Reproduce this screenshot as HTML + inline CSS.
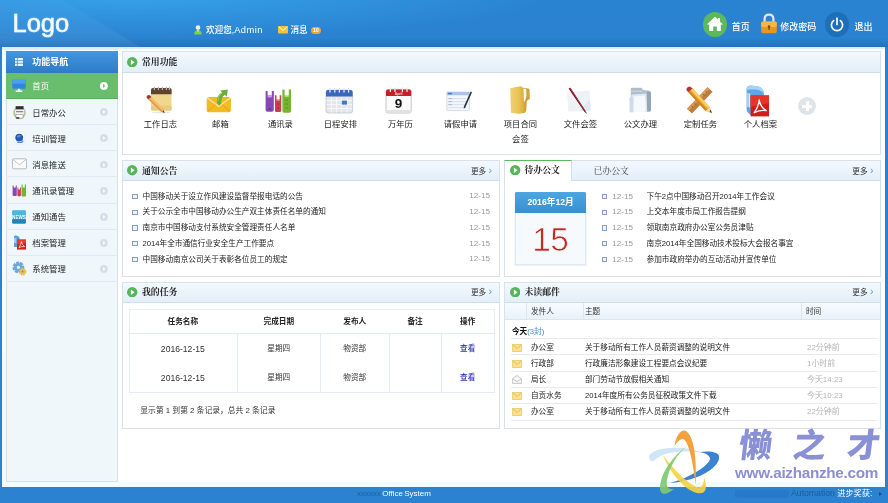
<!DOCTYPE html>
<html lang="zh-CN">
<head>
<meta charset="utf-8">
<title>Office System</title>
<style>
*{margin:0;padding:0;box-sizing:border-box;}
html,body{width:888px;height:503px;overflow:hidden;}
body{filter:contrast(1.001);}
body{position:relative;background:#2a82d0;font-family:"Liberation Sans","Noto Sans CJK SC",sans-serif;font-size:7.65px;color:#333;line-height:1;}
.abs{position:absolute;}
#hdr{position:absolute;left:0;top:0;width:888px;height:46.6px;background:radial-gradient(ellipse 420px 42px at 130px -4px,rgba(58,172,242,.75),rgba(58,172,242,0) 100%),linear-gradient(211deg,rgba(255,255,255,0) 85.2%,rgba(255,255,255,.055) 85.7%),linear-gradient(to bottom,#2a83d1 0,#2a82d0 80%,#2678c6 93%,#2270ba 100%);}
#logo{position:absolute;left:12.5px;top:8.6px;font-size:25.5px;color:#f2f9ff;letter-spacing:0px;line-height:28px;-webkit-text-stroke:0.5px #f2f9ff;text-shadow:0 0 2px rgba(255,255,255,.35);}
.ht{position:absolute;color:#fff;white-space:nowrap;}
#frame{position:absolute;left:2.3px;top:46.5px;width:882.6px;height:440.3px;background:linear-gradient(#cfeafa 0,#e0f2fd 2.6px,#f4fcff 3px,#f2fbff 100%);}
#content{position:absolute;left:115.6px;top:2.8px;width:767px;height:432.5px;background:#fff;}
#side{position:absolute;left:4px;top:4.5px;width:111.4px;height:431px;background:#f0f7fb;border:1px solid #d9dfe9;}
#sidehd{position:absolute;left:-1px;top:-1px;width:111.4px;height:22.5px;background:linear-gradient(#4496e0,#2b7ac6);}
#sidehd span{position:absolute;left:26px;top:7.2px;font-size:9px;font-weight:bold;color:#fff;}
.mi{position:absolute;left:-1px;width:111.4px;height:26.1px;border-bottom:1px solid #dfe9f1;}
.mi.on{background:#69be6d;border-bottom:1px solid #5cac60;}
.mi span{position:absolute;left:26px;top:9.6px;font-size:8.4px;color:#222;white-space:nowrap;}
.mi.on span{color:#fff;top:9.2px;}
.mi svg{position:absolute;}
.panel{position:absolute;background:#fff;border:1px solid #d9e2eb;}
.ph{position:absolute;left:0;top:0;right:0;height:20px;background:linear-gradient(#f3f9fe,#e3eef8);border-bottom:1px solid #d0dce8;}
.pt{position:absolute;left:19px;top:5.6px;font-family:"Liberation Serif","Noto Serif CJK SC",serif;font-weight:bold;font-size:8.9px;color:#222;white-space:nowrap;}
.gc{position:absolute;left:4.4px;top:4.2px;}
.more{position:absolute;right:6.5px;top:5.6px;font-size:7.65px;color:#333;white-space:nowrap;}
.more b{font-weight:normal;color:#5a9fd6;margin-left:2.4px;font-size:10.5px;line-height:7px;font-family:"Liberation Sans",sans-serif;}
.ic{position:absolute;width:60px;top:33px;height:60px;}
.ic span{position:absolute;left:0;top:31.7px;width:60px;text-align:center;font-size:8.3px;color:#222;white-space:nowrap;line-height:15.2px;}
.ic svg{position:absolute;}
.li{position:absolute;white-space:nowrap;color:#222;margin-top:.8px;}
.li:before{content:"";box-sizing:border-box;position:absolute;left:-10.2px;top:1.3px;width:5.4px;height:5.4px;border:1.3px solid #859fc3;background:#eef3f9;}
.dt{position:absolute;color:#999;white-space:nowrap;font-size:8.1px;margin-top:.6px;}
.wm{position:absolute;top:425px;font-family:"Liberation Sans","Noto Sans CJK SC",sans-serif;font-weight:900;font-size:33px;line-height:42px;color:#8a90d6;transform:skewX(-7deg);}
.nb:before{display:none;}
.tc{position:absolute;text-align:center;white-space:nowrap;color:#333;height:10px;line-height:10px;}
.tab{position:absolute;left:-1px;top:-1px;width:68px;height:21px;background:#fff;border-top:1.6px solid #5cb85c;border-right:1px solid #d5dfe8;border-left:1px solid #d5dfe8;}
</style>
</head>
<body>
<div id="hdr">
  <div id="logo">Logo</div>
  <svg class="abs" style="left:194px;top:25px" width="8" height="10" viewBox="0 0 8 10"><circle cx="4" cy="2.6" r="2.3" fill="#f6f3c8"/><path d="M0.3 9.6 C0.3 6.2 1.8 5.2 4 5.2 C6.2 5.2 7.7 6.2 7.7 9.6 Z" fill="#7fd04a"/><path d="M3 5.2 L4 7 L5 5.2 Z" fill="#f6f3c8"/></svg>
  <div class="ht" style="left:206px;top:26px;font-size:8.6px;font-weight:500">欢迎您,<span style="font-size:9.3px;letter-spacing:.45px">Admin</span></div>
  <svg class="abs" style="left:277.5px;top:26px" width="10" height="8" viewBox="0 0 10 8"><rect x="0" y="0" width="10" height="7.6" rx="0.8" fill="#f3c13a"/><path d="M0.6 0.8 L5 4.4 L9.4 0.8" fill="none" stroke="#fff6d0" stroke-width="1"/></svg>
  <div class="ht" style="left:290.5px;top:26px;font-size:8.6px;font-weight:500">消息</div>
  <div class="abs" style="left:311px;top:26.5px;width:9.6px;height:7px;border-radius:3.5px;background:#f0a23a;color:#fff;font-size:5.5px;font-weight:bold;text-align:center;line-height:7px;">10</div>

  <div class="abs" style="left:702.7px;top:12.2px;width:24.6px;height:24.6px;border-radius:50%;background:#5cb85c;"></div>
  <svg class="abs" style="left:706px;top:16px" width="18" height="16" viewBox="0 0 18 16"><path d="M9 0.8 L0.8 8.4 L3.2 8.4 L3.2 15 L7.2 15 L7.2 10.4 L10.8 10.4 L10.8 15 L14.8 15 L14.8 8.4 L17.2 8.4 L14 5.4 L14 2 L12 2 L12 3.6 Z" fill="#fff"/></svg>
  <div class="ht" style="left:731.8px;top:22.8px;font-size:9px;font-weight:500">首页</div>
  <svg class="abs" style="left:760px;top:13px" width="18" height="21" viewBox="0 0 18 21"><path d="M4.6 9 L4.6 6 C4.6 2.8 6.4 1.6 9 1.6 C11.6 1.6 13.4 2.8 13.4 6 L13.4 9" fill="none" stroke="#e6e6e6" stroke-width="2.2"/><rect x="1.2" y="8.6" width="15.6" height="11.6" rx="1.6" fill="#ea961c"/><rect x="1.2" y="8.6" width="15.6" height="5.4" rx="1.6" fill="#f6b840"/><circle cx="9" cy="13.6" r="1.3" fill="#7a4a10"/><rect x="8.4" y="14" width="1.2" height="3" fill="#7a4a10"/></svg>
  <div class="ht" style="left:780.3px;top:22.8px;font-size:9px;font-weight:500">修改密码</div>
  <div class="abs" style="left:824.7px;top:12.2px;width:24.6px;height:24.6px;border-radius:50%;background:#1d6fb8;"></div>
  <svg class="abs" style="left:829px;top:16.5px" width="16" height="16" viewBox="0 0 16 16"><path d="M4.6 3.6 A5.6 5.6 0 1 0 11.4 3.6" fill="none" stroke="#fff" stroke-width="1.7" stroke-linecap="round"/><path d="M8 1.2 L8 7.4" stroke="#fff" stroke-width="1.7" stroke-linecap="round"/></svg>
  <div class="ht" style="left:854.5px;top:22.8px;font-size:9px;font-weight:500">退出</div>
</div>
<div id="frame">
  <div id="content"></div>
  <div id="side">
    <div id="sidehd"><svg class="abs" style="left:9px;top:7px" width="8" height="8" viewBox="0 0 8 8"><rect x="0" y="0" width="8" height="8" fill="#e8f2fc"/><path d="M0 2.6 H8 M0 5.3 H8 M2.4 0 V8" stroke="#3a88d4" stroke-width="0.7"/></svg><span>功能导航</span></div>
    <div class="mi on" style="top:21px;height:26px"><svg style="left:6px;top:5.5px" width="14" height="14" viewBox="0 0 14 14"><rect x="0.3" y="0.8" width="13.4" height="9" rx="0.8" fill="#2f86e0"/><rect x="0.3" y="0.8" width="13.4" height="4" rx="0.8" fill="#4aa0f0"/><rect x="5.8" y="9.8" width="2.4" height="2" fill="#eef4fa"/><rect x="3.6" y="11.6" width="6.8" height="1.4" rx="0.6" fill="#fff"/></svg><span>首页</span><svg style="left:93.9px;top:9.3px" width="7.8" height="7.8" viewBox="0 0 10 10"><circle cx="5" cy="5" r="5" fill="#fff"/><path d="M3.9 2.6 L6.9 5 L3.9 7.4 Z" fill="#69be6d"/></svg></div>
    <div class="mi" style="top:47.00px"><svg style="left:6px;top:5.5px" width="15" height="15" viewBox="0 0 15 15"><circle cx="7.5" cy="8" r="6.3" fill="#b9d08a"/><rect x="3.6" y="1.2" width="8" height="3.2" fill="#2d2d2d"/><rect x="2.6" y="4.4" width="10" height="5.6" rx="0.8" fill="#f2f2f2" stroke="#9a9a9a" stroke-width="0.5"/><rect x="4" y="6.2" width="7.2" height="1" fill="#6e6e6e"/><rect x="4" y="9.4" width="7" height="3.6" fill="#fff" stroke="#888" stroke-width="0.5"/><rect x="4.2" y="12.2" width="3" height="1.4" fill="#2d2d2d"/></svg><span>日常办公</span><svg style="left:93.9px;top:9.3px" width="7.8" height="7.8" viewBox="0 0 10 10"><circle cx="5" cy="5" r="5" fill="#d6dfe7"/><path d="M3.9 2.6 L6.9 5 L3.9 7.4 Z" fill="#fff"/></svg></div>
    <div class="mi" style="top:73.15px"><svg style="left:7px;top:6px" width="13" height="14" viewBox="0 0 13 14"><rect x="1.2" y="0.6" width="10.6" height="12.6" rx="1.2" fill="#f7f9fc" stroke="#dfe5ec" stroke-width="0.5"/><circle cx="6.2" cy="6.6" r="3.9" fill="#2458a8"/><path d="M3.6 5 Q6 3 8.6 4.6 Q7 6.6 4.8 7 Z" fill="#4c8ee0"/><path d="M3.6 10 Q6.5 12.4 10 10 L9 12 L4.6 12 Z" fill="#3b78c8"/><circle cx="9.4" cy="10.4" r="1.1" fill="#5a9be8"/></svg><span>培训管理</span><svg style="left:93.9px;top:9.3px" width="7.8" height="7.8" viewBox="0 0 10 10"><circle cx="5" cy="5" r="5" fill="#d6dfe7"/><path d="M3.9 2.6 L6.9 5 L3.9 7.4 Z" fill="#fff"/></svg></div>
    <div class="mi" style="top:99.30px"><svg style="left:6px;top:7px" width="15" height="12" viewBox="0 0 15 12"><rect x="0.6" y="0.8" width="13.8" height="10" rx="0.8" fill="#fdfdfd" stroke="#a9a9a9" stroke-width="0.8"/><path d="M1 1.4 L7.5 6.8 L14 1.4" fill="none" stroke="#b5b5b5" stroke-width="0.8"/></svg><span>消息推送</span><svg style="left:93.9px;top:9.3px" width="7.8" height="7.8" viewBox="0 0 10 10"><circle cx="5" cy="5" r="5" fill="#d6dfe7"/><path d="M3.9 2.6 L6.9 5 L3.9 7.4 Z" fill="#fff"/></svg></div>
    <div class="mi" style="top:125.45px"><svg style="left:5.5px;top:6px" width="15" height="14" viewBox="0 0 15 14"><path d="M0.6 2.4 L1.6 2.4 L1.6 4.6 L3.8 4.6 L3.8 2.4 L4.8 2.4 L4.8 12 Q4.8 13 3.8 13 L1.6 13 Q0.6 13 0.6 12 Z" fill="#8748b6"/><path d="M5.4 4.6 L6.3 4.6 L6.3 6.6 L8 6.6 L8 4.6 L8.9 4.6 L8.9 12.2 Q8.9 13.2 7.9 13.2 L6.4 13.2 Q5.4 13.2 5.4 12.2 Z" fill="#c8404e"/><path d="M9.5 1.4 L10.6 1.4 L10.6 4.4 L12.8 4.4 L12.8 1.4 L14 1.4 L14 12.4 Q14 13.4 13 13.4 L10.5 13.4 Q9.5 13.4 9.5 12.4 Z" fill="#74b432"/></svg><span>通讯录管理</span><svg style="left:93.9px;top:9.3px" width="7.8" height="7.8" viewBox="0 0 10 10"><circle cx="5" cy="5" r="5" fill="#d6dfe7"/><path d="M3.9 2.6 L6.9 5 L3.9 7.4 Z" fill="#fff"/></svg></div>
    <div class="mi" style="top:151.60px"><svg style="left:6px;top:6px" width="14" height="14" viewBox="0 0 14 14"><rect x="0.2" y="0.6" width="13.6" height="12.8" rx="1" fill="#2a9fce"/><rect x="0.2" y="0.6" width="13.6" height="5" rx="1" fill="#4cb8e0"/><rect x="0.2" y="9.6" width="13.6" height="3.8" rx="1" fill="#1d86b4"/><text x="7" y="8.6" font-family="Liberation Sans,sans-serif" font-size="4.6" font-weight="bold" fill="#fff" text-anchor="middle">NEWS</text></svg><span>通知通告</span><svg style="left:93.9px;top:9.3px" width="7.8" height="7.8" viewBox="0 0 10 10"><circle cx="5" cy="5" r="5" fill="#d6dfe7"/><path d="M3.9 2.6 L6.9 5 L3.9 7.4 Z" fill="#fff"/></svg></div>
    <div class="mi" style="top:177.75px"><svg style="left:6.5px;top:5px" width="14" height="16" viewBox="0 0 14 16"><path d="M1 1 Q4 -0.4 6.6 2.4 L6.6 12 L1 12 Z" fill="#5b9be0"/><path d="M1.6 3 L1.6 8 M2.8 3 L2.8 8" stroke="#dcecfb" stroke-width="0.7"/><path d="M4 4.6 L13 4.6 L13 14.6 L4 14.6 Z" fill="#d8201c"/><path d="M4 4.6 L13 4.6 L13 8 L4 9.4 Z" fill="#ea3a30"/><path d="M6 12.6 Q8 9.4 8.4 6.6 Q8.8 9.8 11.6 11.6 Q8.6 11.2 6 12.6 Z" fill="none" stroke="#fff" stroke-width="0.7"/></svg><span>档案管理</span><svg style="left:93.9px;top:9.3px" width="7.8" height="7.8" viewBox="0 0 10 10"><circle cx="5" cy="5" r="5" fill="#d6dfe7"/><path d="M3.9 2.6 L6.9 5 L3.9 7.4 Z" fill="#fff"/></svg></div>
    <div class="mi" style="top:203.90px"><svg style="left:6px;top:5.5px" width="15" height="15" viewBox="0 0 15 15"><circle cx="6.4" cy="6.4" r="4.6" fill="none" stroke="#6ea6e2" stroke-width="2.6" stroke-dasharray="2.9 0.9"/><circle cx="6.4" cy="6.4" r="4.4" fill="#6ea6e2"/><circle cx="6.4" cy="6.4" r="1.6" fill="#e4effa"/><circle cx="10.6" cy="10.6" r="3" fill="none" stroke="#eab83a" stroke-width="1.6" stroke-dasharray="1.7 0.7"/><circle cx="10.6" cy="10.6" r="2.8" fill="#edc248"/><circle cx="10.6" cy="10.6" r="1" fill="#6a90c8"/></svg><span>系统管理</span><svg style="left:93.9px;top:9.3px" width="7.8" height="7.8" viewBox="0 0 10 10"><circle cx="5" cy="5" r="5" fill="#d6dfe7"/><path d="M3.9 2.6 L6.9 5 L3.9 7.4 Z" fill="#fff"/></svg></div>
  </div>
</div>
<div class="panel" style="left:122px;top:51px;width:759px;height:103.5px">
  <div class="ph" style="height:21px"><svg class="gc" style="top:5px" width="10.4" height="10.4" viewBox="0 0 10 10"><circle cx="5" cy="5" r="5" fill="#56b45a"/><path d="M3.7 2.4 L7.3 5 L3.7 7.6 Z" fill="#fff"/></svg><div class="pt" style="top:6.4px">常用功能</div></div>
  <div class="ic" style="left:7.4px"><svg style="left:15px;top:0" width="30" height="32" viewBox="0 0 30 32"><ellipse cx="16" cy="27.4" rx="9" ry="1" fill="#e6e6e6"/><rect x="6" y="3.6" width="20.6" height="22" rx="1.6" fill="#efd88e"/><rect x="6" y="20.5" width="20.6" height="5.1" rx="1.4" fill="#e6cc7c"/><path d="M6 5 Q6 3 8 3 L24.6 3 Q26.6 3 26.6 5 L26.6 9.2 L6 9.2 Z" fill="#5e4330"/><path d="M9.4 2.4 V4.6 M13.4 2.4 V4.6 M17.4 2.4 V4.6 M21.4 2.4 V4.6 M24.4 2.6 V4.6" stroke="#b9b2aa" stroke-width="1.3" stroke-linecap="round"/><path d="M3.2 14.4 L6.2 12 L18.4 24.6 L19.4 28 L16 26.8 Z" fill="#e89a46"/><path d="M4.8 13.2 L6.2 12 L18.4 24.6 L17.2 25.6 Z" fill="#f6c074"/><path d="M1.6 12.6 Q1.2 11.4 2.4 10.6 L3.4 10 Q4.4 9.6 5.2 10.6 L6.4 12 L3.2 14.6 Z" fill="#9c3a34"/><path d="M17.6 26.4 L18.9 25.6 L19.6 28.2 Z" fill="#4a3020"/></svg><span>工作日志</span></div>
  <div class="ic" style="left:67.4px"><svg style="left:15px;top:0" width="30" height="32" viewBox="0 0 30 32"><rect x="1.7" y="11.9" width="24.2" height="15.4" rx="2.6" fill="#f2bb22"/><path d="M2.4 13 L13.8 21.4 L25.2 13" fill="none" stroke="#fbe392" stroke-width="1.5"/><path d="M2.6 26.4 L10.4 19.6 M25 26.4 L17.2 19.6" stroke="#dca414" stroke-width="0.9"/><path d="M12.2 18.6 Q11 10.4 17 7.6 L15.4 5.4 L22.8 4.4 L21.8 11.8 L19.8 9.8 Q16 12 16.2 19 L14 20.6 Z" fill="#6ab036"/><path d="M13.2 16 Q12.6 10.6 17 8.2" fill="none" stroke="#9cd45c" stroke-width="1"/></svg><span>邮箱</span></div>
  <div class="ic" style="left:127.4px"><svg style="left:15px;top:0" width="30" height="32" viewBox="0 0 30 32"><path d="M0.6 6 L2.6 6 L2.6 10.6 L6.8 10.6 L6.8 6 L8.8 6 L8.8 25 Q8.8 26.8 7 26.8 L2.4 26.8 Q0.6 26.8 0.6 25 Z" fill="#8748b6"/><path d="M2.6 10.6 H6.8 V12.4 H2.6 Z" fill="#c9a4e6"/><path d="M9.9 10.2 L11.5 10.2 L11.5 14 L14.7 14 L14.7 10.2 L16.3 10.2 L16.3 25.4 Q16.3 27 14.7 27 L11.5 27 Q9.9 27 9.9 25.4 Z" fill="#c8404e"/><path d="M11.5 14 H14.7 V15.6 H11.5 Z" fill="#eea8ae"/><path d="M17.4 4.5 L19.6 4.5 L19.6 10 L23.8 10 L23.8 4.5 L26 4.5 L26 26 Q26 27.8 24.2 27.8 L19.2 27.8 Q17.4 27.8 17.4 26 Z" fill="#74b432"/><path d="M19.6 10 H23.8 V11.8 H19.6 Z" fill="#c4e58e"/><path d="M20.6 15 H22.8 M20.6 19 H22.8 M20.6 23 H22.8" stroke="#4f8a1c" stroke-width="1.1"/><path d="M12.2 19 H14 M12.2 23 H14" stroke="#9a2632" stroke-width="1"/><path d="M3 24 H6.4" stroke="#5e2a8c" stroke-width="1"/></svg><span>通讯录</span></div>
  <div class="ic" style="left:187.4px"><svg style="left:15px;top:0" width="30" height="32" viewBox="0 0 30 32"><rect x="1" y="5" width="26.6" height="23" rx="2.2" fill="#e3e6ea" stroke="#b9c0c8" stroke-width="0.7"/><path d="M1 7.2 Q1 5 3.2 5 L25.4 5 Q27.6 5 27.6 7.2 L27.6 11.6 L1 11.6 Z" fill="#3768bd"/><path d="M5 3.4 V7 M9.8 3.4 V7 M14.4 3.4 V7 M19 3.4 V7 M23.6 3.4 V7" stroke="#dfe6f2" stroke-width="1.3" stroke-linecap="round"/><path d="M1.4 15.6 H27.2 M1.4 19.6 H27.2 M1.4 23.6 H27.2 M6.4 12 V27.6 M11.6 12 V27.6 M16.8 12 V27.6 M22 12 V27.6" stroke="#fafbfc" stroke-width="0.8"/><rect x="16.8" y="15.6" width="5.2" height="4" fill="#3f78cc"/></svg><span>日程安排</span></div>
  <div class="ic" style="left:247.4px"><svg style="left:15px;top:0" width="30" height="32" viewBox="0 0 30 32"><rect x="1" y="4.4" width="25.2" height="23.6" rx="2.2" fill="#fbfbfb" stroke="#b8b8b8" stroke-width="0.8"/><path d="M1 6.6 Q1 4.4 3.2 4.4 L24 4.4 Q26.2 4.4 26.2 6.6 L26.2 11 L1 11 Z" fill="#c4202c"/><path d="M5.4 3 V6.4 M10 3 V6.4 M17.4 3 V6.4 M22 3 V6.4" stroke="#e6e6e6" stroke-width="1.3" stroke-linecap="round"/><rect x="1.4" y="25" width="24.4" height="2.6" fill="#e2e2e2"/><text x="13.6" y="23.4" text-anchor="middle" font-family="Liberation Sans,sans-serif" font-weight="bold" font-size="13.5" fill="#111">9</text><text x="13.6" y="9.8" text-anchor="middle" font-family="Liberation Sans,sans-serif" font-weight="bold" font-size="3.4" fill="#f6d0d0">April</text></svg><span>万年历</span></div>
  <div class="ic" style="left:307.4px"><svg style="left:15px;top:0" width="30" height="32" viewBox="0 0 30 32"><rect x="1.8" y="7" width="22.6" height="18.6" rx="1" fill="#f3f6fb" stroke="#c7d0dc" stroke-width="0.7"/><rect x="1.8" y="7" width="22.6" height="3.2" fill="#a9c4ec"/><rect x="3" y="7.8" width="4" height="1.6" fill="#4a7fd0"/><path d="M3.4 13.6 H21 M3.4 16.6 H21 M3.4 19.6 H21 M3.4 22.6 H21" stroke="#d3dbe7" stroke-width="0.9"/><path d="M3.4 13.6 H7 M3.4 16.6 H7 M3.4 19.6 H7" stroke="#9db4d8" stroke-width="0.9"/><path d="M25.6 6.4 L27 7.2 L20.4 22.2 L18.8 23.8 L18.9 21.5 Z" fill="#2a3442"/></svg><span>请假申请</span></div>
  <div class="ic" style="left:367.4px"><svg style="left:15px;top:0" width="30" height="32" viewBox="0 0 30 32"><defs><linearGradient id="fg1" x1="0" y1="0" x2="1" y2="0"><stop offset="0" stop-color="#f0d272"/><stop offset="0.55" stop-color="#e9c455"/><stop offset="1" stop-color="#d6a838"/></linearGradient></defs><path d="M16.6 2.6 L23.2 3.6 Q24.5 3.8 24.5 5.2 L24.8 14 Q22.8 15 21.8 16 L21.2 26.6 L17 28 Z" fill="#cfa236"/><path d="M18.4 3.6 L21.2 4 L21.4 11 Q20.6 14 19.8 16.4 L18.6 16.4 Z" fill="#fdfbf2"/><path d="M5.2 3.8 Q5.2 3.1 5.9 3 L15.4 1.2 Q16.9 1 17.4 2.6 Q18.8 9 18.8 15.6 Q19 21 20.2 26.6 Q20.4 27.7 19.4 27.9 L14 28.8 L6.8 27.9 Q5.9 27.7 5.9 26.9 Z" fill="url(#fg1)"/></svg><span>项目合同<br>会签</span></div>
  <div class="ic" style="left:427.4px"><svg style="left:15px;top:0" width="30" height="32" viewBox="0 0 30 32"><path d="M2 7 L24.4 5.4 L25.8 25.4 L3.4 26.8 Z" fill="#eef1f6"/><path d="M14 26.2 L25.8 25.4 L25 14 Z" fill="#dfeaf0"/><path d="M3.6 3.4 L5.4 2.8 L20.6 26 L21.9 29 L19.4 26.8 Z" fill="#5a1420"/><path d="M4.6 3 L5.4 2.8 L20.6 26 L20 26.4 Z" fill="#c03848"/><path d="M20 26.6 L20.9 26.1 L22 29.2 Z" fill="#8a8a8a"/></svg><span>文件会签</span></div>
  <div class="ic" style="left:487.4px"><svg style="left:15px;top:0" width="30" height="32" viewBox="0 0 30 32"><path d="M5.8 4 Q5.8 2.8 7 2.8 L15.6 2.8 Q16.6 2.8 17.2 3.8 L18 5 L24.4 5.8 Q26 6 26 7.6 L26 25 Q26 26.6 24.4 26.6 L5.8 26.6 Z" fill="#aebccb"/><path d="M22 6.6 L24.4 6.9 Q26 7 26 8.6 L26 25 Q26 26.6 24.4 26.6 L22 26.6 Z" fill="#95a5b6"/><path d="M5.8 5.6 L17.4 5.6 L17.4 7 L5.8 7 Z" fill="#c6d2de"/><path d="M6.6 9.4 L21.4 8.6 L22.2 26.6 L5 27.2 Z" fill="#dde7f1"/><path d="M8.6 11.4 L20 10.6 L21 26.8 L8 27.2 Z" fill="#f6f9fc"/><path d="M4.4 12.6 L8.4 12.2 L8.4 27.2 L4.6 27.2 Z" fill="#cfdbe8"/></svg><span>公文办理</span></div>
  <div class="ic" style="left:547.4px"><svg style="left:15px;top:0" width="30" height="32" viewBox="0 0 30 32"><path d="M22.6 2.2 L27.6 6.8 L7 28.4 L2 23.8 Z" fill="#c17c3c"/><path d="M22.6 2.2 L24.6 4 L4 25.6 L2 23.8 Z" fill="#d79a5c"/><path d="M20.6 6 L22 7.4 M17.8 9 L19.2 10.4 M15 12 L16.4 13.4 M9.4 18 L10.8 19.4 M6.6 21 L8 22.4" stroke="#7e4e22" stroke-width="0.8"/><path d="M3.2 7 L7.6 3.2 L24.8 22.2 L26.8 28.2 L20.6 26 Z" fill="#e9a22e"/><path d="M5.6 4.9 L7.6 3.2 L24.8 22.2 L23 23.8 Z" fill="#f8cf62"/><path d="M3.2 7 L4.6 5.8 L22 24.8 L20.6 26 Z" fill="#cf861c"/><path d="M1.4 5 Q1.2 3 3 2 Q4.8 1 6 2.2 L7.6 3.4 L3.2 7.2 Z" fill="#b8343a"/><path d="M20.6 26 L24.8 22.2 L26.8 28.2 Z" fill="#f0d6a8"/><path d="M24.4 25.9 L25.9 25 L26.8 28.2 Z" fill="#3e3028"/></svg><span>定制任务</span></div>
  <div class="ic" style="left:607.4px"><svg style="left:15px;top:0" width="30" height="32" viewBox="0 0 30 32"><path d="M1.6 3.4 Q2.2 0.6 6 0.6 L12.4 1.2 Q18 2.2 18.8 8 L19 12 L7 12 L7 31.4 L3.4 28 Q1.6 26.4 1.6 24.4 Z" fill="#60a6e4"/><path d="M1.6 3.4 Q2.2 0.6 6 0.6 L12.4 1.2 Q18 2.2 18.8 8 Q15.4 4.6 9.6 4.4 L4 4.6 Q2.2 4.8 1.6 6 Z" fill="#a4d4f6"/><path d="M3 8 V22 M4.7 8.6 V22.6" stroke="#f0f7fd" stroke-width="1"/><path d="M5.6 10.4 L24 10.4 L24 31.4 L5.6 31.4 Z" fill="#d21c1a"/><path d="M5.6 10.4 L24 10.4 L24 18 L5.6 22 Z" fill="#e6362c"/><path d="M9.2 27.8 Q13.6 21.6 14.2 14.8 Q15 21.6 21.2 25.6 Q14.8 24.8 9.2 27.8 Z" fill="none" stroke="#fff" stroke-width="1.3" stroke-linejoin="round"/></svg><span>个人档案</span></div>
  <div class="abs" style="left:675.3px;top:45.3px;width:18.2px;height:18.2px;border-radius:50%;background:#dde5eb;"></div><div class="abs" style="left:679.4px;top:52.6px;width:10px;height:3.6px;background:#fff;"></div><div class="abs" style="left:682.6px;top:49.4px;width:3.6px;height:10px;background:#fff;"></div>
</div>
<div class="panel" style="left:122px;top:160px;width:377.6px;height:116.5px">
  <div class="ph"><svg class="gc" width="10.4" height="10.4" viewBox="0 0 10 10"><circle cx="5" cy="5" r="5" fill="#56b45a"/><path d="M3.7 2.4 L7.3 5 L3.7 7.6 Z" fill="#fff"/></svg><div class="pt">通知公告</div><div class="more">更多<b>›</b></div></div>
  <div class="li" style="left:19.5px;top:30.8px">中国移动关于设立作风建设监督举报电话的公告</div><div class="dt" style="left:346.3px;top:30.8px">12-15</div>
  <div class="li" style="left:19.5px;top:46.5px">关于公示全市中国移动办公生产双主体责任名单的通知</div><div class="dt" style="left:346.3px;top:46.5px">12-15</div>
  <div class="li" style="left:19.5px;top:62.3px">南京市中国移动支付系统安全管理责任人名单</div><div class="dt" style="left:346.3px;top:62.3px">12-15</div>
  <div class="li" style="left:19.5px;top:78.0px">2014年全市通信行业安全生产工作要点</div><div class="dt" style="left:346.3px;top:78.0px">12-15</div>
  <div class="li" style="left:19.5px;top:93.8px">中国移动南京公司关于表彰各位员工的规定</div><div class="dt" style="left:346.3px;top:93.8px">12-15</div>
</div>
<div class="panel" style="left:504.4px;top:160px;width:376.6px;height:116.5px">
  <div class="ph"><div class="tab"><svg class="gc" style="left:5px;top:3.5px" width="10.4" height="10.4" viewBox="0 0 10 10"><circle cx="5" cy="5" r="5" fill="#56b45a"/><path d="M3.7 2.4 L7.3 5 L3.7 7.6 Z" fill="#fff"/></svg><div class="pt" style="top:4.5px">待办公文</div></div><div class="pt" style="left:88px;font-weight:normal;color:#444">已办公文</div><div class="more">更多<b>›</b></div></div>
  <div class="abs" style="left:10px;top:31px;width:70.4px;height:73px;background:#f6fafd;border:1px solid #dfe8f0;box-shadow:0 0.5px 1.5px rgba(120,150,180,.35)"><div class="abs" style="left:-1px;top:-1px;width:70.4px;height:20.6px;background:linear-gradient(#4ba6e1,#3990d0);border-radius:1.5px 1.5px 0 0;color:#fff;font-weight:bold;font-size:8.7px;text-align:center;line-height:21.4px;">2016年12月</div><div class="abs" style="left:-1px;top:28.6px;width:70.4px;text-align:center;font-size:33.5px;line-height:36px;color:#c8261c;letter-spacing:-0.6px;text-indent:-0.6px;-webkit-text-stroke:0.7px #f6fafd;">15</div></div>
  <div class="li" style="left:106.9px;top:30.8px;color:#999;font-size:8.1px">12-15</div><div class="li nb" style="left:141.2px;top:30.8px">下午2点中国移动召开2014年工作会议</div>
  <div class="li" style="left:106.9px;top:46.5px;color:#999;font-size:8.1px">12-15</div><div class="li nb" style="left:141.2px;top:46.5px">上交本年度市局工作报告提纲</div>
  <div class="li" style="left:106.9px;top:62.3px;color:#999;font-size:8.1px">12-15</div><div class="li nb" style="left:141.2px;top:62.3px">领取南京政府办公室公务员津贴</div>
  <div class="li" style="left:106.9px;top:78.0px;color:#999;font-size:8.1px">12-15</div><div class="li nb" style="left:141.2px;top:78.0px">南京2014年全国移动技术投标大会报名事宜</div>
  <div class="li" style="left:106.9px;top:93.8px;color:#999;font-size:8.1px">12-15</div><div class="li nb" style="left:141.2px;top:93.8px">参加市政府举办的互动活动并宣传单位</div>
</div>
<div class="panel" style="left:122px;top:281.5px;width:377.6px;height:147.2px">
  <div class="ph"><svg class="gc" width="10.4" height="10.4" viewBox="0 0 10 10"><circle cx="5" cy="5" r="5" fill="#56b45a"/><path d="M3.7 2.4 L7.3 5 L3.7 7.6 Z" fill="#fff"/></svg><div class="pt">我的任务</div><div class="more">更多<b>›</b></div></div>
  <div class="abs" style="left:5.5px;top:26.8px;width:366px;height:83.5px;border:1px solid #e6ecf2;"></div>
  <div class="abs" style="left:5.5px;top:50.8px;width:366px;height:0;border-top:1px solid #e4eaf0;"></div>
  <div class="abs" style="left:114.2px;top:51px;width:0;height:59px;border-left:1px solid #e4eaf0;"></div>
  <div class="abs" style="left:197.4px;top:51px;width:0;height:59px;border-left:1px solid #e4eaf0;"></div>
  <div class="abs" style="left:266.2px;top:51px;width:0;height:59px;border-left:1px solid #e4eaf0;"></div>
  <div class="abs" style="left:318.0px;top:51px;width:0;height:59px;border-left:1px solid #e4eaf0;"></div>
  <div class="tc" style="left:5.5px;width:108.7px;top:34.8px;font-weight:bold;color:#222">任务名称</div>
  <div class="tc" style="left:114.2px;width:83.2px;top:34.8px;font-weight:bold;color:#222">完成日期</div>
  <div class="tc" style="left:197.4px;width:68.8px;top:34.8px;font-weight:bold;color:#222">发布人</div>
  <div class="tc" style="left:266.2px;width:51.8px;top:34.8px;font-weight:bold;color:#222">备注</div>
  <div class="tc" style="left:318.0px;width:53.4px;top:34.8px;font-weight:bold;color:#222">操作</div>
  <div class="tc" style="left:5.5px;width:108.7px;top:61.5px;font-size:8.6px">2016-12-15</div>
  <div class="tc" style="left:114.2px;width:83.2px;top:61.5px">星期四</div>
  <div class="tc" style="left:197.4px;width:68.8px;top:61.5px">物资部</div>
  <div class="tc" style="left:318.0px;width:53.4px;top:61.5px"><span style="color:#2c30b0;font-weight:500">查看</span></div>
  <div class="tc" style="left:5.5px;width:108.7px;top:90.8px;font-size:8.6px">2016-12-15</div>
  <div class="tc" style="left:114.2px;width:83.2px;top:90.8px">星期四</div>
  <div class="tc" style="left:197.4px;width:68.8px;top:90.8px">物资部</div>
  <div class="tc" style="left:318.0px;width:53.4px;top:90.8px"><span style="color:#2c30b0;font-weight:500">查看</span></div>
  <div class="abs" style="left:17.3px;top:124.5px;white-space:nowrap;color:#333;font-size:7.8px;margin-top:0.4px">显示第 1 到第 2 条记录，总共 2 条记录</div>
</div>
<div class="panel" style="left:504.4px;top:281.5px;width:376.6px;height:147.2px">
  <div class="ph"><svg class="gc" width="10.4" height="10.4" viewBox="0 0 10 10"><circle cx="5" cy="5" r="5" fill="#56b45a"/><path d="M3.7 2.4 L7.3 5 L3.7 7.6 Z" fill="#fff"/></svg><div class="pt">未读邮件</div><div class="more">更多<b>›</b></div></div>
  <div class="abs" style="left:0;top:20px;width:374.6px;height:17px;background:linear-gradient(#f6fbff,#e9f2fa);border-bottom:1px solid #dbe5ee;"></div>
  <div class="abs" style="left:20.2px;top:20px;width:0;height:16.5px;border-left:1px solid #dde6ee;"></div>
  <div class="abs" style="left:77.2px;top:20px;width:0;height:16.5px;border-left:1px solid #dde6ee;"></div>
  <div class="abs" style="left:296.0px;top:20px;width:0;height:16.5px;border-left:1px solid #dde6ee;"></div>
  <div class="abs" style="left:25.6px;top:25.7px;white-space:nowrap;color:#333">发件人</div>
  <div class="abs" style="left:79.6px;top:25.7px;white-space:nowrap;color:#333">主题</div>
  <div class="abs" style="left:300.6px;top:25.7px;white-space:nowrap;color:#333">时间</div>
  <div class="abs" style="left:6.6px;top:45.0px;white-space:nowrap;color:#111"><b>今天</b><span style="color:#4a86c8">(3封)</span></div>
  <div class="abs" style="left:6px;top:55.6px;width:366.5px;height:0;border-top:1px solid #e7ebf0;"></div>
  <svg class="abs" style="left:6.6px;top:61.1px" width="10" height="8" viewBox="0 0 10 8"><rect x="0.3" y="0.3" width="9.4" height="7.2" rx="0.6" fill="#f9e08c" stroke="#e6be4a" stroke-width="0.7"/><path d="M0.6 0.8 L5 4.4 L9.4 0.8" fill="none" stroke="#e3b93c" stroke-width="0.7"/></svg>
  <div class="abs" style="left:25.6px;top:61.1px;white-space:nowrap;color:#222">办公室</div><div class="abs" style="left:79.6px;top:61.1px;white-space:nowrap;color:#222">关于移动所有工作人员薪资调整的说明文件</div><div class="abs" style="left:301.6px;top:61.1px;white-space:nowrap;font-size:7.95px;color:#b4b4b4">22分钟前</div>
  <div class="abs" style="left:6px;top:71.8px;width:366.5px;height:0;border-top:1px solid #e7ebf0;"></div>
  <svg class="abs" style="left:6.6px;top:77.3px" width="10" height="8" viewBox="0 0 10 8"><rect x="0.3" y="0.3" width="9.4" height="7.2" rx="0.6" fill="#f9e08c" stroke="#e6be4a" stroke-width="0.7"/><path d="M0.6 0.8 L5 4.4 L9.4 0.8" fill="none" stroke="#e3b93c" stroke-width="0.7"/></svg>
  <div class="abs" style="left:25.6px;top:77.3px;white-space:nowrap;color:#222">行政部</div><div class="abs" style="left:79.6px;top:77.3px;white-space:nowrap;color:#222">行政廉洁形象建设工程要点会议纪要</div><div class="abs" style="left:301.6px;top:77.3px;white-space:nowrap;font-size:7.95px;color:#b4b4b4">1小时前</div>
  <div class="abs" style="left:6px;top:88.0px;width:366.5px;height:0;border-top:1px solid #e7ebf0;"></div>
  <svg class="abs" style="left:6.6px;top:92.5px" width="10" height="9" viewBox="0 0 10 9"><path d="M0.4 3.8 L5 0.5 L9.6 3.8 L9.6 8.4 L0.4 8.4 Z" fill="#f6f6f6" stroke="#b4b4b4" stroke-width="0.7"/><path d="M0.6 4 L5 6.6 L9.4 4" fill="none" stroke="#b4b4b4" stroke-width="0.7"/></svg>
  <div class="abs" style="left:25.6px;top:93.5px;white-space:nowrap;color:#222">局长</div><div class="abs" style="left:79.6px;top:93.5px;white-space:nowrap;color:#222">部门劳动节放假相关通知</div><div class="abs" style="left:301.6px;top:93.5px;white-space:nowrap;font-size:7.95px;color:#b4b4b4">今天14:23</div>
  <div class="abs" style="left:6px;top:104.1px;width:366.5px;height:0;border-top:1px solid #e7ebf0;"></div>
  <svg class="abs" style="left:6.6px;top:109.6px" width="10" height="8" viewBox="0 0 10 8"><rect x="0.3" y="0.3" width="9.4" height="7.2" rx="0.6" fill="#f9e08c" stroke="#e6be4a" stroke-width="0.7"/><path d="M0.6 0.8 L5 4.4 L9.4 0.8" fill="none" stroke="#e3b93c" stroke-width="0.7"/></svg>
  <div class="abs" style="left:25.6px;top:109.6px;white-space:nowrap;color:#222">自贡水务</div><div class="abs" style="left:79.6px;top:109.6px;white-space:nowrap;color:#222">2014年度所有公务员征税政策文件下载</div><div class="abs" style="left:301.6px;top:109.6px;white-space:nowrap;font-size:7.95px;color:#b4b4b4">今天10:23</div>
  <div class="abs" style="left:6px;top:120.2px;width:366.5px;height:0;border-top:1px solid #e7ebf0;"></div>
  <svg class="abs" style="left:6.6px;top:125.7px" width="10" height="8" viewBox="0 0 10 8"><rect x="0.3" y="0.3" width="9.4" height="7.2" rx="0.6" fill="#f9e08c" stroke="#e6be4a" stroke-width="0.7"/><path d="M0.6 0.8 L5 4.4 L9.4 0.8" fill="none" stroke="#e3b93c" stroke-width="0.7"/></svg>
  <div class="abs" style="left:25.6px;top:125.7px;white-space:nowrap;color:#222">办公室</div><div class="abs" style="left:79.6px;top:125.7px;white-space:nowrap;color:#222">关于移动所有工作人员薪资调整的说明文件</div><div class="abs" style="left:301.6px;top:125.7px;white-space:nowrap;font-size:7.95px;color:#b4b4b4">22分钟前</div>
  <div class="abs" style="left:6px;top:137.0px;width:366.5px;height:0;border-top:1px solid #e7ebf0;"></div>
</div>
<div id="ftr">
  <div class="abs" style="left:357px;top:489.3px;font-size:8px;word-spacing:-1px;white-space:nowrap;color:#fff;line-height:9px"><span style="color:#1d62a6">xxxxxx</span> Office System</div>
  <div class="abs" style="left:735px;top:489.5px;width:54px;height:8px;background:#2472c4;opacity:.55;border-radius:2px;"></div>
  <div class="abs" style="left:791px;top:489px;font-size:8.2px;white-space:nowrap;color:#fff;line-height:9px"><span style="color:#1c5c9e;font-size:8.7px">Automation</span> 进步奖获:</div>
  <div class="abs" style="left:879px;top:491.5px;border-left:3px solid #1c4f88;border-top:2.2px solid transparent;border-bottom:2.2px solid transparent;"></div>
</div>
<svg class="abs" style="left:640px;top:420px" width="100" height="83" viewBox="640 420 100 83">
  <path d="M649,456 C654,446 686,445 703,453 C688,450 664,451 656,459 C652,463 649,461 649,456 Z" fill="#cfe5f8"/>
  <path d="M700,452 C710,450.5 718,452 719,456 C721,466 700,481 670,483 C692,477 711,464 710,458 C709,455 705,453 700,452 Z" fill="#3a82d2"/>
  <path d="M663,455 C668,470 684,490 697,493 C706,495 708,488 704,477 C704,484 702,488 697,487 C688,484 672,468 663,455 Z" fill="#f3d244" opacity=".92"/>
  <path d="M687,446 C670,458 660,476 660,488 C660,495 666,496 674,489 C668,490 666,486 667,480 C669,468 677,454 687,446 Z" fill="#7fc96c" opacity=".92"/>
  <path d="M674.6,446 C676,436 680,430.6 684.4,430.6 C692,432 697.4,452 695.6,485 C693,460 688,440 683,439 C680,439 677,442 674.6,446 Z" fill="#f2a23c"/>
</svg>
<div class="wm" style="left:739px;">懒</div><div class="wm" style="left:793px;">之</div><div class="wm" style="left:847px;">才</div>
<div class="abs" style="left:735px;top:464.4px;font-size:15.3px;font-weight:bold;color:#8c8fd0;white-space:nowrap;line-height:18px;letter-spacing:-0.3px;">www.aizhanzhe.com</div>
</body>
</html>
